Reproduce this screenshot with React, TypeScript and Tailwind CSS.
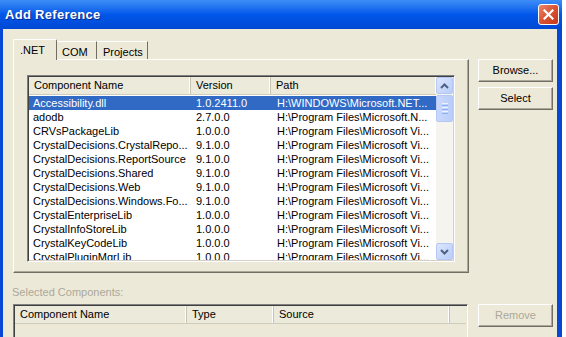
import React from 'react';

type Row = { name: string; version: string; path: string };

const rows: Row[] = [
  { name: 'Accessibility.dll', version: '1.0.2411.0', path: 'H:\\WINDOWS\\Microsoft.NET...' },
  { name: 'adodb', version: '2.7.0.0', path: 'H:\\Program Files\\Microsoft.N...' },
  { name: 'CRVsPackageLib', version: '1.0.0.0', path: 'H:\\Program Files\\Microsoft Vi...' },
  { name: 'CrystalDecisions.CrystalRepo...', version: '9.1.0.0', path: 'H:\\Program Files\\Microsoft Vi...' },
  { name: 'CrystalDecisions.ReportSource', version: '9.1.0.0', path: 'H:\\Program Files\\Microsoft Vi...' },
  { name: 'CrystalDecisions.Shared', version: '9.1.0.0', path: 'H:\\Program Files\\Microsoft Vi...' },
  { name: 'CrystalDecisions.Web', version: '9.1.0.0', path: 'H:\\Program Files\\Microsoft Vi...' },
  { name: 'CrystalDecisions.Windows.Fo...', version: '9.1.0.0', path: 'H:\\Program Files\\Microsoft Vi...' },
  { name: 'CrystalEnterpriseLib', version: '1.0.0.0', path: 'H:\\Program Files\\Microsoft Vi...' },
  { name: 'CrystalInfoStoreLib', version: '1.0.0.0', path: 'H:\\Program Files\\Microsoft Vi...' },
  { name: 'CrystalKeyCodeLib', version: '1.0.0.0', path: 'H:\\Program Files\\Microsoft Vi...' },
  { name: 'CrystalPluginMgrLib', version: '1.0.0.0', path: 'H:\\Program Files\\Microsoft Vi...' },
];

const HeaderCell: React.FC<{ w: string; label: string }> = ({ w, label }) => (
  <div className={`${w} h-full shrink-0 flex items-center pl-[5px] border-r border-[#C7C5B2] shadow-[inset_-1px_0_0_#fff]`}>
    {label}
  </div>
);

const ScrollBtn: React.FC<{ down?: boolean }> = ({ down }) => (
  <div className="h-[17px] w-[17px] shrink-0 rounded-[2px] border border-[#B4C7F5] bg-linear-to-br from-[#DCE6FE] to-[#B9CDF8] flex items-center justify-center">
    <svg width="9" height="6" viewBox="0 0 9 6">
      <polyline
        points={down ? '1,1 4.5,4.5 8,1' : '1,5 4.5,1.5 8,5'}
        fill="none"
        stroke="#4D6185"
        strokeWidth="2"
      />
    </svg>
  </div>
);

const Btn: React.FC<{ label: string; disabled?: boolean }> = ({ label, disabled }) => (
  <div
    className={`w-[75px] h-[23px] flex items-center justify-center bg-[#ECE9D8] border-t border-l border-white border-r border-b border-r-[#716F64] border-b-[#716F64] shadow-[inset_-1px_-1px_0_#ACA899] ${
      disabled ? 'text-[#ACA899]' : 'text-black'
    }`}
  >
    {label}
  </div>
);

export default function App() {
  return (
    <div className="w-[566px] h-[337px] overflow-hidden flex bg-white font-['Liberation_Sans',Arial,sans-serif] text-[11px] text-black">
      <div className="w-[562px] h-full flex flex-col bg-[#0747D6]">
        {/* title bar */}
        <div className="h-[29px] shrink-0 flex items-center justify-between pl-[5px] pr-[3px] bg-linear-to-b from-[#3D8DF6] via-[#0157EA] to-[#0148D3]">
          <span className="text-white font-bold text-[13px] tracking-[0.3px] [text-shadow:1px_1px_0_#0A2B88]">
            Add Reference
          </span>
          <div className="w-[21px] h-[21px] rounded-[3px] border border-white bg-linear-to-br from-[#E9866A] via-[#DA5230] to-[#C23A1C] flex items-center justify-center">
            <svg width="11" height="11" viewBox="0 0 11 11">
              <path d="M1.5 1.5 L9.5 9.5 M9.5 1.5 L1.5 9.5" stroke="#fff" strokeWidth="2.2" strokeLinecap="square" />
            </svg>
          </div>
        </div>

        {/* body */}
        <div className="flex-1 ml-[3px] mr-[5px] bg-[#ECE9D8] flex flex-col pl-[10px]">
          <div className="flex gap-[9px]">
            {/* tabs + panel */}
            <div className="w-[456px] flex flex-col">
              <div className="h-[30px] flex items-end">
                <div className="w-[44px] h-[21px] -mb-px z-10 bg-[#ECE9D8] border-t border-l border-white border-r border-r-[#716F64] pl-[6px] pt-[2px] rounded-t-[2px]">
                  .NET
                </div>
                <div className="w-[40px] h-[18px] bg-[#ECE9D8] border-t border-white border-r border-r-[#716F64] pl-[5px] pt-[2px]">
                  COM
                </div>
                <div className="w-[51px] h-[18px] bg-[#ECE9D8] border-t border-white border-r border-r-[#716F64] pl-[6px] pt-[2px]">
                  Projects
                </div>
              </div>
              <div className="h-[214px] border-t border-l border-white border-r border-b border-r-[#716F64] border-b-[#716F64] shadow-[inset_-1px_-1px_0_#ACA899] pt-[15px] pl-[13px]">
                {/* list view */}
                <div className="w-[428px] h-[187px] border-t border-l border-[#808080] border-r border-b border-r-white border-b-white shadow-[inset_1px_1px_0_#404040,inset_-1px_-1px_0_#D4D0C8] p-px flex bg-white">
                  <div className="w-[408px] flex flex-col overflow-hidden">
                    <div className="h-[18px] shrink-0 flex bg-[#EBEADB] border-b border-[#D0CCBC]">
                      <HeaderCell w="w-[162px]" label="Component Name" />
                      <HeaderCell w="w-[80px]" label="Version" />
                      <HeaderCell w="w-[166px]" label="Path" />
                    </div>
                    <div className="flex flex-col pt-px">
                      {rows.map((r, i) => (
                        <div
                          key={r.name}
                          className={`h-[14px] shrink-0 flex items-center whitespace-nowrap ${
                            i === 0 ? 'bg-[#316AC5] text-white' : ''
                          }`}
                        >
                          <div className="w-[162px] shrink-0 pl-[4px] overflow-hidden">{r.name}</div>
                          <div className="w-[80px] shrink-0 pl-[5px] overflow-hidden">{r.version}</div>
                          <div className="w-[166px] shrink-0 pl-[6px] overflow-hidden">{r.path}</div>
                        </div>
                      ))}
                    </div>
                  </div>
                  {/* scrollbar */}
                  <div className="w-[17px] flex flex-col bg-[#F5F4EE]">
                    <ScrollBtn />
                    <div className="h-[27px] w-[17px] mt-px rounded-[2px] border border-[#B4C7F5] bg-linear-to-r from-[#C9D8FC] to-[#BBCEF9] flex flex-col items-center justify-center gap-px">
                      <div className="w-[6px] h-px bg-[#EEF4FE]" />
                      <div className="w-[6px] h-px bg-[#8CB0F8]" />
                      <div className="w-[6px] h-px bg-[#EEF4FE]" />
                      <div className="w-[6px] h-px bg-[#8CB0F8]" />
                      <div className="w-[6px] h-px bg-[#EEF4FE]" />
                      <div className="w-[6px] h-px bg-[#8CB0F8]" />
                    </div>
                    <div className="flex-1" />
                    <ScrollBtn down />
                  </div>
                </div>
              </div>
            </div>

            {/* right buttons */}
            <div className="flex flex-col gap-[5px] pt-[30px]">
              <Btn label="Browse..." />
              <Btn label="Select" />
            </div>
          </div>

          {/* selected components */}
          <div className="mt-[13px] h-[13px] leading-[13px] text-[#ACA899] -ml-px">Selected Components:</div>
          <div className="mt-[5px] flex gap-[10px]">
            <div className="w-[455px] h-[40px] border-t border-l border-[#808080] border-r border-r-white shadow-[inset_1px_1px_0_#404040] p-px bg-[#ECE9D8]">
              <div className="h-[18px] flex bg-[#EBEADB] border-b border-[#D0CCBC]">
                <HeaderCell w="w-[172px]" label="Component Name" />
                <HeaderCell w="w-[87px]" label="Type" />
                <HeaderCell w="w-[176px]" label="Source" />
              </div>
            </div>
            <Btn label="Remove" disabled />
          </div>
        </div>
      </div>
      <div className="flex-1 bg-white" />
    </div>
  );
}
